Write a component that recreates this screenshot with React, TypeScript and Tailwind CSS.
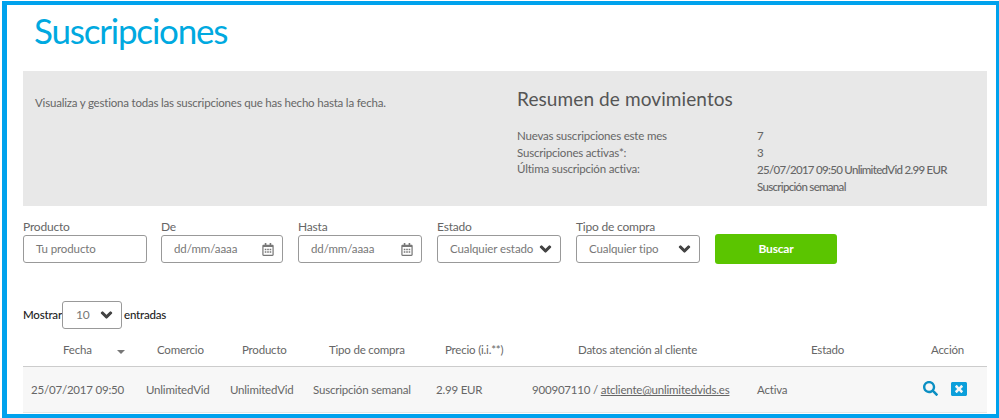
import type { ReactNode } from 'react';
import { FaChevronDown, FaRegCalendarAlt, FaSearch, FaWindowClose } from 'react-icons/fa';

function Field({ label, width, children }: { label: string; width: string; children: ReactNode }) {
  return (
    <div className={`flex flex-col ${width}`}>
      <label className="h-[15px] text-[12px] leading-[15px] tracking-[-0.2px] text-[#666]">{label}</label>
      <div className="mt-[1px] flex h-[28px] items-center justify-between whitespace-nowrap rounded-[3px] border border-[#999] bg-white pl-[12px] pr-[8px] text-[11.5px] tracking-[-0.1px] text-[#777]">
        {children}
      </div>
    </div>
  );
}

function Chevron() {
  return <FaChevronDown className="h-[12px] w-[13px] shrink-0 text-[#444]" stroke="currentColor" strokeWidth={50} />;
}

function DateIcon() {
  return <FaRegCalendarAlt className="h-[13px] w-[12px] shrink-0 text-[#777]" />;
}

const headers = [
  { label: 'Comercio', cls: 'w-[85px]' },
  { label: 'Producto', cls: 'w-[87px]' },
  { label: 'Tipo de compra', cls: 'w-[116px]' },
  { label: 'Precio (i.i.**)', cls: 'w-[133px]' },
  { label: 'Datos atención al cliente', cls: 'w-[233px]' },
  { label: 'Estado', cls: 'w-[120px]' },
  { label: 'Acción', cls: '' },
];

export default function App() {
  return (
    <div className="h-[418px] w-[999px] overflow-hidden bg-white pl-[2px] pt-[1px] font-['Lato',sans-serif] text-[11.5px] tracking-[-0.2px]">
      <div className="h-[417px] w-[997px] overflow-hidden border-b-[4px] border-l-[5px] border-r-[3px] border-t-[4px] border-[#00a2ed]">
        <div className="pl-[16px] pr-[9px]">
          <h1 className="h-[66px] pl-[11px] pt-[1px] text-[35px] leading-[48px] tracking-[-1.2px] text-[#00a9e0]">Suscripciones</h1>
          <section className="flex h-[135px] bg-[#e8e8e8] pl-[12px] text-[#666]">
            <p className="w-[482px] pt-[24px] leading-[16px]">Visualiza y gestiona todas las suscripciones que has hecho hasta la fecha.</p>
            <div className="flex-1 pt-[16px]">
              <h2 className="text-[19px] leading-[24px] tracking-[0.1px] text-[#555]">Resumen de movimientos</h2>
              <dl className="mt-[17px] grid grid-cols-[240px_1fr] leading-[16.5px]">
                <dt>Nuevas suscripciones este mes</dt>
                <dd className="font-medium">7</dd>
                <dt>Suscripciones activas*:</dt>
                <dd className="font-medium">3</dd>
                <dt>Última suscripción activa:</dt>
                <dd className="font-medium leading-[17px] tracking-[-0.7px]">
                  25/07/2017 09:50 UnlimitedVid 2.99 EUR
                  <br />
                  Suscripción semanal
                </dd>
              </dl>
            </div>
          </section>

          <form className="mt-[13px] flex items-start">
            <Field label="Producto" width="w-[124px]"><span>Tu producto</span></Field>
            <div className="w-[14px]" />
            <Field label="De" width="w-[122px]"><span>dd/mm/aaaa</span><DateIcon /></Field>
            <div className="w-[15px]" />
            <Field label="Hasta" width="w-[124px]"><span>dd/mm/aaaa</span><DateIcon /></Field>
            <div className="w-[15px]" />
            <Field label="Estado" width="w-[124px]"><span>Cualquier estado</span><Chevron /></Field>
            <div className="w-[15px]" />
            <Field label="Tipo de compra" width="w-[124px]"><span>Cualquier tipo</span><Chevron /></Field>
            <button type="button" className="ml-[15px] mt-[15px] h-[30px] w-[122px] rounded-[3px] bg-[#5bc500] text-[12px] font-bold text-white">Buscar</button>
          </form>

          <div className="mt-[37px] flex items-center font-medium text-[#222]">
            <span className="w-[39px]">Mostrar</span>
            <div className="flex h-[28px] w-[60px] items-center justify-between rounded-[3px] border border-[#999] pl-[13px] pr-[8px] text-[12px] font-normal text-[#777]">
              <span>10</span>
              <Chevron />
            </div>
            <span className="ml-[2px]">entradas</span>
          </div>

          <div className="flex h-[38px] items-start whitespace-nowrap border-b border-[#ccc] pl-[40px] pt-[13px] leading-[16px] text-[#666]">
            <div className="flex w-[94px] items-center">
              <span>Fecha</span>
              <span className="ml-[25px] mt-[3px] h-0 w-0 border-x-[4px] border-t-[4px] border-x-transparent border-t-[#777]" />
            </div>
            {headers.map((h) => (
              <div key={h.label} className={h.cls}>{h.label}</div>
            ))}
          </div>
          <div className="flex h-[46px] items-center whitespace-nowrap border-b border-[#e6e6e6] bg-[#f7f7f7] pl-[8px] text-[#666]">
            <div className="w-[115px]">25/07/2017 09:50</div>
            <div className="w-[84px]">UnlimitedVid</div>
            <div className="w-[83px]">UnlimitedVid</div>
            <div className="w-[123px]">Suscripción semanal</div>
            <div className="w-[96px]">2.99 EUR</div>
            <div className="w-[225px]">900907110 / <span className="underline">atcliente@unlimitedvids.es</span></div>
            <div className="w-[166px]">Activa</div>
            <div className="flex items-center gap-[13px] pb-[2px]">
              <FaSearch className="h-[15px] w-[15px] text-[#0b8fc3]" />
              <FaWindowClose className="h-[16px] w-[16px] text-[#0c9fdb]" />
            </div>
          </div>
        </div>
      </div>
    </div>
  );
}
